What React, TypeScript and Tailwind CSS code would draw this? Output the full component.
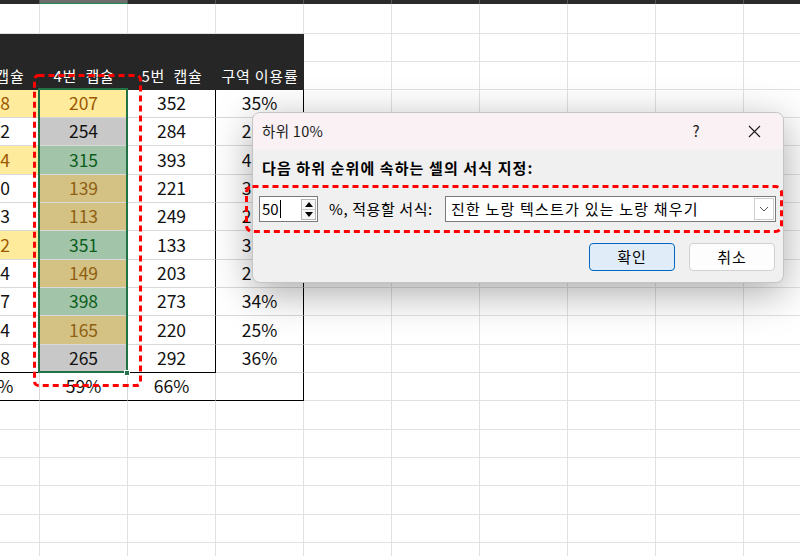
import React from 'react';

type BKind = 'active' | 'gray' | 'green' | 'yel';

const data: { a: string; aY: boolean; b: string; bk: BKind; c: string; d: string; h: number }[] = [
  { a: '278', aY: true, b: '207', bk: 'active', c: '352', d: '35%', h: 28 },
  { a: '312', aY: false, b: '254', bk: 'gray', c: '284', d: '28%', h: 28 },
  { a: '264', aY: true, b: '315', bk: 'green', c: '393', d: '41%', h: 29 },
  { a: '350', aY: false, b: '139', bk: 'yel', c: '221', d: '31%', h: 28 },
  { a: '303', aY: false, b: '113', bk: 'yel', c: '249', d: '26%', h: 28 },
  { a: '232', aY: true, b: '351', bk: 'green', c: '133', d: '30%', h: 29 },
  { a: '344', aY: false, b: '149', bk: 'yel', c: '203', d: '27%', h: 28 },
  { a: '357', aY: false, b: '398', bk: 'green', c: '273', d: '34%', h: 28 },
  { a: '284', aY: false, b: '165', bk: 'yel', c: '220', d: '25%', h: 29 },
  { a: '338', aY: false, b: '265', bk: 'gray', c: '292', d: '36%', h: 28 },
];

const H: Record<number, string> = { 28: 'h-[28px]', 29: 'h-[29px]', 30: 'h-[30px]' };

const bgB: Record<BKind, string> = {
  active: 'bg-[#ffeb9c] text-[#9c5700]',
  gray: 'bg-[#c8c8c8] text-[#111111]',
  green: 'bg-[#a2c5a9] text-[#0b5e1c]',
  yel: 'bg-[#d4c184] text-[#8f5f12]',
};

const GRID = 'w-[88px] shrink-0 h-full border-r border-b border-[#e1e1e1]';
const CELL = 'w-[88px] shrink-0 h-full flex items-center justify-center text-[17.5px] border-r border-b';

function Rest({ n }: { n: number }) {
  return (
    <>
      {Array.from({ length: n }).map((_, i) => (
        <div key={i} className={GRID} />
      ))}
    </>
  );
}

function Sheet() {
  return (
    <div className="-ml-[48px] flex flex-col w-[880px]">
      {/* column header strip */}
      <div className="flex h-[4px]">
        <div className="w-[88px] shrink-0 h-full bg-[#2b2b2b] border-r border-[#555555]" />
        <div className="w-[88px] shrink-0 h-full bg-[#6e6e6e] border-r border-[#555555] border-b border-b-[#1f8a4c]" />
        {Array.from({ length: 8 }).map((_, i) => (
          <div key={i} className="w-[88px] shrink-0 h-full bg-[#2b2b2b] border-r border-[#555555]" />
        ))}
      </div>
      {/* row 0 */}
      <div className={`flex ${H[30]}`}>
        <Rest n={10} />
      </div>
      {/* header row 1 */}
      <div className={`flex ${H[28]}`}>
        <div className="w-[352px] shrink-0 h-full bg-[#262626]" />
        <Rest n={6} />
      </div>
      {/* header row 2 */}
      <div className={`flex ${H[28]}`}>
        <div className="w-[352px] shrink-0 h-full bg-[#262626] flex text-white text-[15px] tracking-[0.8px]">
          <div className="w-[88px] flex items-center justify-center whitespace-nowrap">3번 캡슐</div>
          <div className="w-[88px] flex items-center justify-center whitespace-nowrap">4번&nbsp;&nbsp;캡슐</div>
          <div className="w-[88px] flex items-center justify-center whitespace-nowrap">5번&nbsp;&nbsp;캡슐</div>
          <div className="w-[88px] flex items-center justify-center whitespace-nowrap">구역 이용률</div>
        </div>
        <Rest n={6} />
      </div>
      {/* data rows */}
      {data.map((r, i) => {
        const last = i === data.length - 1;
        return (
          <div key={i} className={`flex ${H[r.h]}`}>
            <div
              className={`${CELL} ${r.aY ? 'bg-[#ffeb9c] text-[#9c5700]' : 'bg-white text-[#111111]'} border-r-[#d9d9d9] ${
                last ? 'border-b-black' : 'border-b-[#d9d9d9]'
              }`}
            >
              {r.a}
            </div>
            <div className={`${CELL} ${bgB[r.bk]} border-r-[#d9d9d9] ${last ? 'border-b-black' : 'border-b-[#d9d9d9]'}`}>
              {r.b}
            </div>
            <div className={`${CELL} bg-white text-[#111111] border-r-black ${last ? 'border-b-black' : 'border-b-[#d9d9d9]'}`}>
              {r.c}
            </div>
            <div className={`${CELL} bg-white text-[#111111] border-r-black border-b-[#d9d9d9]`}>{r.d}</div>
            <Rest n={6} />
          </div>
        );
      })}
      {/* totals row */}
      <div className={`flex ${H[28]}`}>
        <div className={`${CELL} bg-white text-[#111111] border-r-[#d9d9d9] border-b-black`}>63%</div>
        <div className={`${CELL} bg-white text-[#111111] border-r-[#d9d9d9] border-b-black`}>59%</div>
        <div className={`${CELL} bg-white text-[#111111] border-r-[#d9d9d9] border-b-black`}>66%</div>
        <div className={`${CELL} bg-white text-[#111111] border-r-black border-b-black`} />
        <Rest n={6} />
      </div>
      {[29, 28, 28, 29, 28, 28].map((h, i) => (
        <div key={i} className={`flex ${H[h]}`}>
          <Rest n={10} />
        </div>
      ))}
    </div>
  );
}

function Dialog() {
  return (
    <div className="absolute left-[252px] top-[112px] w-[532px] h-[171px] rounded-[8px] overflow-hidden bg-[#f0f0f0] border border-[#c4c4c4] shadow-[0_10px_40px_rgba(0,0,0,0.34)] text-[#000000]">
      <div className="flex items-center h-[36px] bg-[#f9f1f4]">
        <div className="flex-1 pl-[9px] text-[14.5px] text-[#1b1b1b] tracking-[0.3px]">하위 10%</div>
        <div className="w-[58px] h-full flex items-center justify-center text-[15px] text-[#1b1b1b]">?</div>
        <div className="w-[58px] h-full flex items-center justify-center">
          <svg width="13" height="13" viewBox="0 0 13 13">
            <path d="M1 1 L12 12 M12 1 L1 12" stroke="#1b1b1b" strokeWidth="1.1" fill="none" />
          </svg>
        </div>
      </div>
      <div className="mt-[9px] h-[20px] pl-[9px] flex items-center text-[15px] font-bold tracking-[1.1px] whitespace-nowrap">
        다음 하위 순위에 속하는 셀의 서식 지정:
      </div>
      <div className="mt-[18px] h-[26px] pl-[6px] pr-[7px] flex items-center">
        <div className="w-[59px] h-[26px] border border-[#7a7a7a] bg-white flex items-center">
          <div className="flex-1 pl-[2px] flex items-center text-[15px]">
            <span>50</span>
            <span className="w-[1px] h-[18px] bg-black ml-[1px]" />
          </div>
          <div className="w-[15px] h-[21px] mr-[1px] border border-[#b4b4b4] bg-[#f7f7f7] flex flex-col">
            <div className="flex-1 flex items-center justify-center border-b border-[#c8c8c8]">
              <svg width="8" height="5" viewBox="0 0 8 5">
                <path d="M0 5 L4 0 L8 5 Z" fill="#000" />
              </svg>
            </div>
            <div className="flex-1 flex items-center justify-center">
              <svg width="8" height="5" viewBox="0 0 8 5">
                <path d="M0 0 L8 0 L4 5 Z" fill="#000" />
              </svg>
            </div>
          </div>
        </div>
        <div className="ml-[11px] text-[15px] tracking-[0.6px] whitespace-nowrap">%, 적용할 서식:</div>
        <div className="ml-auto w-[331px] h-[26px] border border-[#7a7a7a] bg-white flex items-center">
          <div className="flex-1 pl-[5px] text-[15px] tracking-[1.2px] whitespace-nowrap">진한 노랑 텍스트가 있는 노랑 채우기</div>
          <div className="w-[20px] h-[22px] mr-[1px] border border-[#cfcfcf] bg-white flex items-center justify-center">
            <svg width="10" height="6" viewBox="0 0 10 6">
              <path d="M1 1 L5 5 L9 1" stroke="#555" strokeWidth="1" fill="none" />
            </svg>
          </div>
        </div>
      </div>
      <div className="mt-[21px] pr-[8px] flex justify-end gap-[14px]">
        <div className="w-[86px] h-[28px] rounded-[4px] border border-[#0067c0] bg-[#e0ecf8] flex items-center justify-center text-[15px] tracking-[1px]">
          확인
        </div>
        <div className="w-[86px] h-[28px] rounded-[4px] border border-[#d1d1d1] bg-[#fdfdfd] flex items-center justify-center text-[15px] tracking-[1px]">
          취소
        </div>
      </div>
    </div>
  );
}

export default function App() {
  return (
    <div className="relative w-[800px] h-[556px] overflow-hidden bg-white font-['Noto_Sans_CJK_KR',sans-serif]">
      <Sheet />
      {/* selection */}
      <div className="absolute left-[38px] top-[88px] w-[90px] h-[285px] border-2 border-[#217346]" />
      <div className="absolute left-[124px] top-[370px] w-[6px] h-[6px] bg-[#217346] border border-white" />
      <Dialog />
      <svg className="absolute left-0 top-0 pointer-events-none" width="800" height="556" viewBox="0 0 800 556">
        <rect x="34.5" y="75.5" width="106" height="310" rx="4" fill="none" stroke="#ff0000" strokeWidth="3" strokeDasharray="6 4" />
        <rect x="246.5" y="186.5" width="535" height="45" rx="6" fill="none" stroke="#ff0000" strokeWidth="3" strokeDasharray="6 4" />
      </svg>
    </div>
  );
}
